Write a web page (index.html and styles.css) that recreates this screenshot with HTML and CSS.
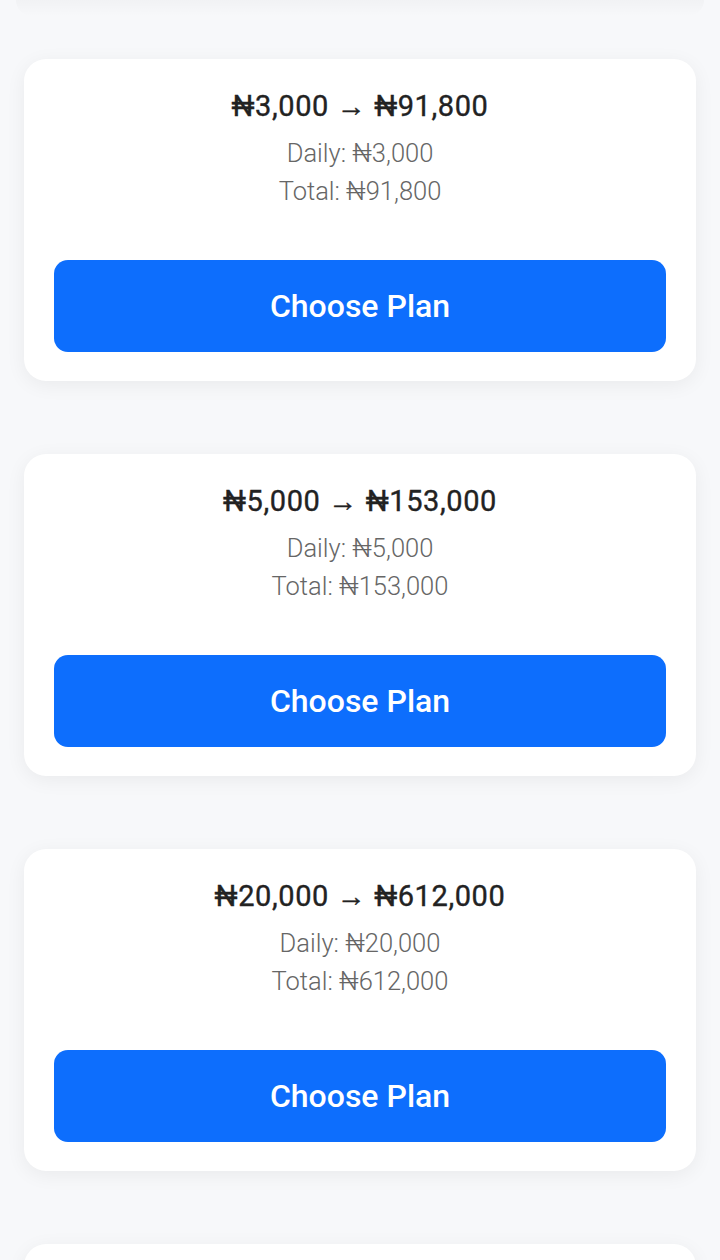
FILE: index.html
```html
<!DOCTYPE html>
<html lang="en">
<head>
    <meta charset="UTF-8">
    <meta name="viewport" content="width=device-width, initial-scale=1.0">
    <title>Savings Plans</title>
    <link rel="stylesheet" href="styles.css">
</head>
<body>
    <section class="plans">
        <div class="plan_card">
            <h3 class="plan_title">₦3,000 → ₦91,800</h3>
            <p class="plan_info">Daily: ₦3,000</p>
            <p class="plan_info">Total: ₦91,800</p>
            <button class="choose_btn">Choose Plan</button>
        </div>

        <div class="plan_card">
            <h3 class="plan_title">₦5,000 → ₦153,000</h3>
            <p class="plan_info">Daily: ₦5,000</p>
            <p class="plan_info">Total: ₦153,000</p>
            <button class="choose_btn">Choose Plan</button>
        </div>

        <div class="plan_card">
            <h3 class="plan_title">₦20,000 → ₦612,000</h3>
            <p class="plan_info">Daily: ₦20,000</p>
            <p class="plan_info">Total: ₦612,000</p>
            <button class="choose_btn">Choose Plan</button>
        </div>

        <!-- next card, only its top shows -->
        <div class="plan_card plan_card_next"></div>
    </section>
</body>
</html>
```

FILE: styles.css
```css
body {
    margin: 0;
    background: #f7f8fa;
    font-family: Roboto, "Liberation Sans", Arial, sans-serif;
    overflow: hidden;
}

/* shadow of the card scrolled above the top edge */
body::before {
    content: "";
    display: block;
    height: 16px;
    margin: 0 16px;
    background: linear-gradient(to bottom, rgba(0, 0, 0, 0.025), rgba(0, 0, 0, 0));
    border-radius: 0 0 30px 30px;
}

.plans {
    display: flex;
    flex-direction: column;
    gap: 73px;
    padding: 43px 24px 0;
}

.plan_card {
    background: #ffffff;
    border-radius: 22px;
    padding: 30px 30px 29px;
    text-align: center;
    box-shadow: 0 4px 20px rgba(0, 0, 0, 0.06);
}

.plan_card_next {
    height: 260px;
}

.plan_title {
    margin: 0 0 11px;
    font-size: 29px;
    line-height: 34px;
    font-weight: 400;
    letter-spacing: 0.6px;
    color: #222222;
    -webkit-text-stroke: 0.35px #222222;
}

.plan_info {
    margin: 0;
    font-size: 25.5px;
    line-height: 38px;
    font-weight: 300;
    color: #666666;
}

.choose_btn {
    display: block;
    width: 100%;
    height: 92px;
    margin-top: 50px;
    border: none;
    border-radius: 14px;
    background: #0d6efd;
    color: #ffffff;
    font-family: inherit;
    font-size: 32px;
    font-weight: 500;
    cursor: pointer;
}
```
